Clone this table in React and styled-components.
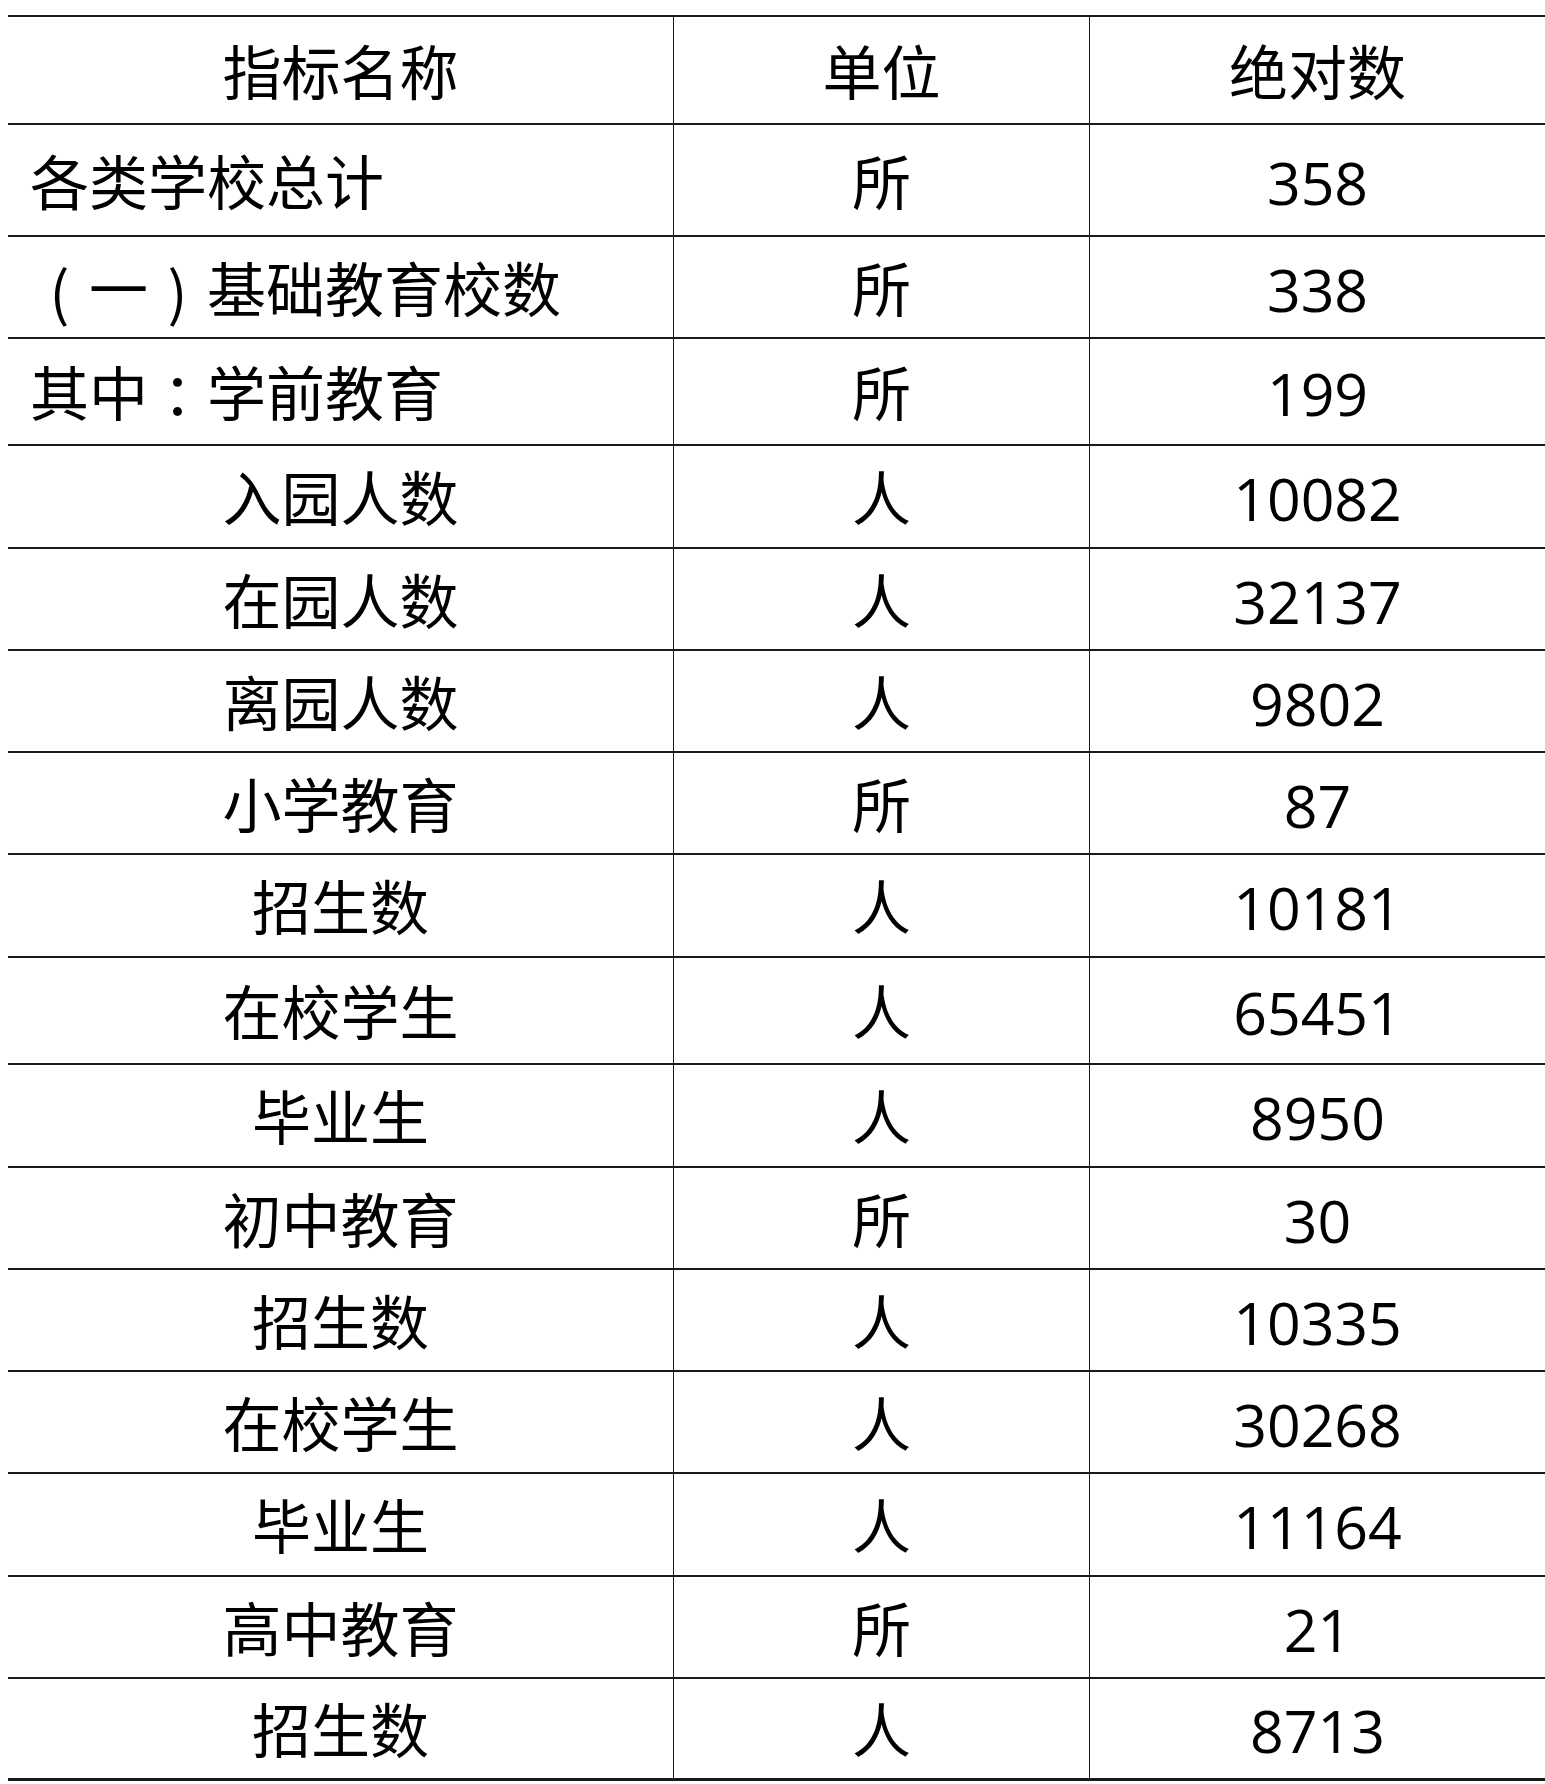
import React from 'react';
import styled, { createGlobalStyle } from 'styled-components';

const GlobalStyle = createGlobalStyle`
    html, body {
        margin: 0;
        padding: 0;
        background: #fff;
    }
    body {
        font-family: "Open Sans", "Noto Sans CJK SC", sans-serif;
        color: #000;
    }
`;

// full-width punctuation in the source sits centred in its box
const Punct = styled.span`
    font-family: "Noto Sans CJK TC", "Noto Sans CJK SC", sans-serif;
`;

const Bracket = styled.span`
    display: inline-block;
    width: 1em;
    text-align: center;
    font-family: "Noto Sans CJK SC", sans-serif;
`;

const rows = [
    { name: '各类学校总计', unit: '所', value: '358', left: true, h: 112 },
    { name: <><Bracket>(</Bracket>一<Bracket>)</Bracket>基础教育校数</>, unit: '所', value: '338', left: true, h: 102 },
    { name: <>其中<Punct>：</Punct>学前教育</>, unit: '所', value: '199', left: true, h: 107 },
    { name: '入园人数', unit: '人', value: '10082', h: 103 },
    { name: '在园人数', unit: '人', value: '32137', h: 102 },
    { name: '离园人数', unit: '人', value: '9802', h: 102 },
    { name: '小学教育', unit: '所', value: '87', h: 102 },
    { name: '招生数', unit: '人', value: '10181', h: 103 },
    { name: '在校学生', unit: '人', value: '65451', h: 107 },
    { name: '毕业生', unit: '人', value: '8950', h: 103 },
    { name: '初中教育', unit: '所', value: '30', h: 102 },
    { name: '招生数', unit: '人', value: '10335', h: 102 },
    { name: '在校学生', unit: '人', value: '30268', h: 102 },
    { name: '毕业生', unit: '人', value: '11164', h: 103 },
    { name: '高中教育', unit: '所', value: '21', h: 102 },
    { name: '招生数', unit: '人', value: '8713', h: 102 },
];

const App = () => {
    return (
        <>
            <GlobalStyle />
            <Page>
                <Table>
                    <Row $h={108}>
                        <Cell>指标名称</Cell>
                        <Cell $divider>单位</Cell>
                        <Cell $divider>绝对数</Cell>
                    </Row>
                    {rows.map((r, i) => (
                        <Row key={i} $h={r.h} $last={i === rows.length - 1}>
                            <Cell $left={r.left}>{r.name}</Cell>
                            <Cell $divider>{r.unit}</Cell>
                            <Cell $divider>{r.value}</Cell>
                        </Row>
                    ))}
                </Table>
            </Page>
        </>
    );
};

const Page = styled.div`
    padding: 15px 0 0 8px;
    width: 1537px;
`;

const Table = styled.div`
    border-top: 2px solid #1a1a1a;
`;

const Row = styled.div`
    display: grid;
    grid-template-columns: 665px 416px 1fr;
    height: ${p => p.$h}px;
    box-sizing: border-box;
    border-bottom: ${p => (p.$last ? '3px' : '2px')} solid #1a1a1a;
`;

const Cell = styled.div`
    display: flex;
    align-items: center;
    justify-content: ${p => (p.$left ? 'flex-start' : 'center')};
    padding-left: ${p => (p.$left ? '22px' : '0')};
    padding-top: 4px;
    box-sizing: border-box;
    font-size: 59px;
    line-height: 1;
    white-space: nowrap;
    border-left: ${p => (p.$divider ? '1.5px solid #1a1a1a' : 'none')};
`;

export default App;
